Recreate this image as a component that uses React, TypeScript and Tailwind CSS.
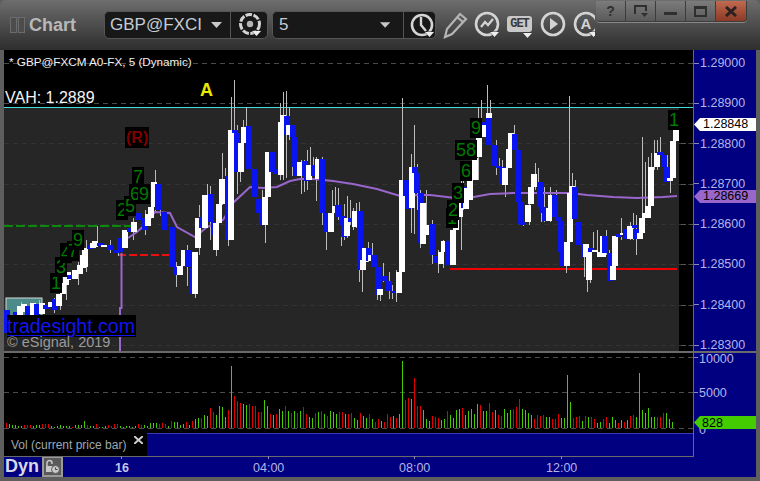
import React from "react";

// [x, top, bottom, colour: 1 = white, 0 = blue], all in page pixels
const bodies: number[][] = [
  [7, 310, 333, 0], [12, 318, 333, 1], [16, 312, 322, 0], [20, 306, 320, 1], [24, 304, 312, 1], [28, 306, 316, 0],
  [33, 303, 316, 1], [37, 304, 316, 0], [42, 303, 314, 1], [46, 305, 309, 0], [51, 302, 307, 1], [55, 299, 310, 0],
  [59, 294, 306, 1], [63, 283, 294, 1], [66, 276, 285, 1], [68, 272, 280, 1], [70, 275, 279, 0], [75, 270, 279, 1], [80, 265, 274, 1],
  [83, 255, 268, 1], [85, 248, 267, 1], [90, 245, 249, 0], [93, 243, 248, 1], [95, 241, 247, 1], [100, 243, 246, 0], [104, 245, 247, 1], [110, 245, 250, 0],
  [117, 250, 253, 0], [120, 238, 252, 0], [125, 230, 248, 1], [130, 228, 232, 0], [134, 222, 232, 1], [138, 213, 220, 0],
  [145, 218, 230, 0], [148, 214, 226, 1], [151, 207, 218, 1], [154, 182, 207, 1], [158, 184, 210, 0], [164, 212, 230, 0],
  [172, 227, 267, 0], [177, 267, 275, 0], [180, 266, 275, 1], [184, 250, 266, 1], [188, 250, 267, 0], [193, 268, 294, 0],
  [195, 252, 294, 1], [198, 218, 248, 1], [202, 217, 228, 0], [205, 195, 228, 1], [211, 194, 222, 0], [214, 222, 235, 0],
  [216, 223, 250, 1], [219, 204, 223, 1], [222, 179, 204, 1], [228, 176, 240, 0], [231, 130, 240, 1], [235, 130, 133, 0],
  [237, 133, 172, 0], [241, 143, 172, 1], [244, 127, 143, 1], [249, 126, 169, 0], [254, 169, 172, 0], [255, 172, 197, 0],
  [259, 199, 213, 0], [262, 213, 225, 0], [265, 197, 225, 1], [268, 152, 197, 1], [272, 152, 172, 0], [276, 169, 174, 0],
  [281, 122, 175, 1], [283, 115, 122, 1], [287, 116, 135, 0], [289, 125, 135, 1], [293, 125, 137, 0], [295, 137, 167, 0],
  [297, 167, 176, 0], [300, 162, 176, 1], [305, 161, 176, 0], [307, 176, 181, 0], [309, 165, 180, 1], [314, 165, 176, 0],
  [318, 159, 179, 1], [322, 159, 213, 0], [327, 213, 232, 0], [331, 213, 232, 1], [335, 206, 213, 1], [338, 205, 217, 0],
  [342, 216, 225, 0], [344, 225, 237, 0], [347, 218, 236, 1], [351, 218, 222, 0], [355, 211, 227, 1], [360, 211, 270, 0],
  [363, 260, 270, 1], [365, 248, 262, 1], [369, 248, 261, 0], [371, 255, 261, 1], [374, 255, 267, 0], [378, 267, 295, 0],
  [380, 289, 295, 1], [384, 276, 281, 0], [389, 281, 291, 0], [394, 291, 293, 0], [399, 272, 293, 1], [402, 180, 272, 1],
  [406, 180, 196, 0], [408, 196, 209, 0], [412, 167, 208, 1], [415, 167, 173, 0], [417, 173, 193, 0], [421, 193, 243, 0],
  [423, 203, 244, 1], [428, 225, 235, 1], [432, 224, 255, 0], [436, 256, 263, 0], [441, 252, 264, 1], [444, 241, 252, 1],
  [448, 241, 265, 0], [453, 230, 265, 1], [456, 217, 230, 1], [460, 186, 217, 1], [464, 187, 208, 0], [466, 188, 209, 1],
  [470, 180, 200, 1], [475, 158, 180, 1], [479, 122, 157, 1], [482, 122, 137, 0], [485, 125, 137, 1], [489, 113, 145, 0],
  [489, 113, 118, 1], [494, 145, 166, 0], [498, 166, 168, 0], [502, 167, 184, 0], [505, 168, 185, 1], [509, 149, 168, 1],
  [511, 133, 149, 1], [515, 134, 150, 0], [518, 150, 202, 0], [521, 202, 224, 0], [523, 222, 225, 0], [528, 205, 222, 1],
  [531, 187, 204, 1], [535, 174, 182, 0], [534, 174, 187, 1], [540, 182, 207, 0], [543, 207, 213, 0], [545, 213, 221, 0],
  [549, 208, 221, 1], [551, 195, 208, 1], [555, 195, 217, 0], [558, 217, 221, 0], [561, 221, 252, 0], [563, 252, 266, 0],
  [567, 242, 266, 1], [570, 193, 242, 1], [572, 186, 193, 1], [575, 187, 219, 0], [579, 222, 245, 0], [584, 244, 257, 0],
  [586, 244, 257, 1], [589, 248, 280, 1], [591, 248, 252, 0], [595, 250, 252, 1], [600, 252, 257, 1], [603, 236, 257, 1],
  [605, 236, 253, 0], [610, 253, 277, 0], [611, 266, 281, 0], [613, 266, 280, 1], [615, 236, 266, 1], [619, 234, 237, 0],
  [623, 233, 235, 1], [626, 229, 239, 0], [630, 226, 239, 1], [635, 225, 228, 0], [636, 229, 239, 0], [640, 233, 239, 1],
  [642, 218, 233, 1], [645, 213, 218, 1], [648, 206, 218, 1], [651, 167, 206, 1], [657, 153, 167, 1], [660, 152, 155, 0],
  [664, 155, 167, 0], [667, 167, 182, 0], [670, 178, 181, 1], [673, 141, 178, 1], [676, 124, 141, 1],
];

// [x, top, bottom]
const wicks: number[][] = [
  [21, 302, 320], [39, 300, 316], [54, 298, 313], [60, 285, 310], [66, 268, 300],
  [78, 262, 285], [86, 240, 272], [97, 226, 247], [110, 240, 253], [118, 240, 256], [133, 218, 240], [145, 210, 235],
  [155, 170, 212], [160, 190, 216], [176, 262, 287], [187, 245, 286], [195, 262, 298], [199, 205, 255], [207, 184, 228],
  [210, 186, 240], [216, 215, 256], [222, 153, 205], [225, 168, 222], [228, 176, 246], [231, 97, 240], [234, 80, 133],
  [237, 125, 194], [240, 168, 182], [243, 120, 160], [246, 107, 127], [259, 200, 225], [262, 190, 225], [265, 190, 243],
  [280, 103, 180], [283, 92, 180], [286, 91, 178], [289, 108, 140], [292, 140, 176], [301, 160, 194], [304, 160, 192],
  [307, 150, 190], [310, 147, 180], [313, 157, 176], [316, 157, 201], [322, 157, 225], [326, 213, 250], [332, 190, 232],
  [335, 187, 215], [338, 188, 220], [341, 216, 246], [344, 204, 240], [347, 196, 238], [350, 200, 225], [353, 208, 230],
  [356, 203, 228], [359, 202, 282], [362, 255, 292], [368, 242, 262], [372, 243, 262], [377, 267, 300], [380, 285, 301],
  [383, 263, 282], [389, 272, 299], [392, 285, 299], [396, 270, 302], [402, 98, 272], [411, 154, 233], [414, 125, 234],
  [417, 164, 210], [420, 190, 248], [426, 190, 235], [432, 220, 264], [438, 250, 273], [443, 240, 268], [461, 170, 250],
  [463, 172, 210], [478, 107, 180], [481, 100, 150], [487, 85, 137], [490, 100, 120], [496, 140, 175], [499, 158, 177],
  [502, 160, 183], [505, 170, 197], [514, 125, 150], [520, 195, 225], [523, 215, 226], [529, 187, 225], [535, 163, 190],
  [538, 168, 200], [541, 200, 222], [544, 187, 222], [550, 187, 222], [556, 190, 218], [562, 240, 255], [566, 250, 273],
  [569, 96, 195], [572, 173, 215], [575, 180, 190], [581, 235, 248], [584, 250, 277], [587, 250, 292], [590, 250, 283],
  [593, 232, 252], [597, 230, 252], [606, 230, 255], [609, 250, 257], [621, 218, 240], [630, 222, 240], [633, 213, 240],
  [636, 215, 255], [642, 137, 213], [645, 162, 210], [648, 157, 210], [651, 153, 190], [654, 140, 170], [657, 140, 170],
  [660, 137, 155], [667, 155, 182], [670, 180, 193], [676, 118, 141],
];

const ema =
  "128,238 137,232 147,223 155,212 170,213 177,227 195,237 207,227 223,220 233,203 250,187 263,188 277,187 290,181 300,179 313,179 333,181 353,184 377,189 400,196 420,195 430,195 447,197 463,199 490,194 513,193 547,193 570,193 587,195 613,197 637,198 663,197 677,196";

// volume by bar, 3px apart from x = 6; positive is green, negative red
const volume: number[] = [
  -5, 4, 3, 3, 2, 2, -3, -3, -3, 2, 3, 3, -4, -4, -4, 2, 1, 2, 3, 2, 2, 2, -1, 3, 3, 3, 7, -3, 2, 2, -4, 1, 1, 2, -3, -2,
  -4, -4, 2, 1, 2, 2, 1, 2, -4, -3, 3, 2, 5, 5, 5, -4, -5, -4, 2, -7, 6, 6, 3, 4, -6, 3, -7, 9, 10, -10, 13, 12, -20, -16,
  13, 22, 21, 11, -18, 62, -32, -27, -25, 24, 23, -24, -22, -22, -16, -16, 28, 22, -14, 13, -14, 19, 17, -22, 17, -15, 17,
  -15, 17, -21, -14, 11, 10, -15, 16, -17, 14, -12, 17, 16, 14, -16, -16, 14, -14, -15, 10, 8, -15, 12, 10, -14, 9, -6,
  -9, 7, -6, -14, -11, 12, -10, 14, 67, -28, -30, 29, -50, -22, -22, 18, 9, 7, -12, -11, -10, 8, 9, -17, 13, 10, 18, 19,
  -20, 13, 17, 19, 14, 24, -23, 17, 17, -25, -16, 18, -13, -12, 19, 15, 18, -19, -21, -29, 19, 18, 15, 13, -9, -13, -12,
  -13, 11, 11, -9, -9, -14, 10, 10, 53, 26, -10, -11, -12, 7, -12, 11, -11, -9, 5, 6, -9, -11, 5, 11, 8, -5, 8, -6, 8,
  -12, -13, 11, 55, 18, 15, 20, 11, 11, -11, -11, -15, 15, 9, 6,
];

const priceTicks = ["1.29000", "1.28900", "1.28800", "1.28700", "1.28600", "1.28500", "1.28400", "1.28300"];
const gridY = [63, 103, 143, 184, 224, 264, 305, 345];

// green sequence counts that sit on black boxes over the candles
const counts = [
  { t: "1", c: "left-[46px] top-[223px]" },
  { t: "3", c: "left-[51px] top-[207px]" },
  { t: "4", c: "left-[56px] top-[193px]" },
  { t: "7", c: "left-[63px] top-[191px]" },
  { t: "9", c: "left-[68px] top-[180px]" },
  { t: "2", c: "left-[112px] top-[150px]" },
  { t: "5", c: "left-[120px] top-[146px]" },
  { t: "6", c: "left-[125px] top-[134px]" },
  { t: "9", c: "left-[134px] top-[134px]" },
  { t: "7", c: "left-[128px] top-[117px]" },
  { t: "1", c: "left-[442px] top-[158px]" },
  { t: "2", c: "left-[443px] top-[150px]" },
  { t: "3", c: "left-[448px] top-[133px]" },
  { t: "6", c: "left-[456px] top-[111px]" },
  { t: "5", c: "left-[451px] top-[90px]" },
  { t: "8", c: "left-[461px] top-[90px]" },
  { t: "9", c: "left-[466px] top-[68px]" },
  { t: "1", c: "left-[664px] top-[60px]" },
];

function Caret({ className }: { className: string }) {
  return (
    <svg className={className} width="11" height="6" viewBox="0 0 11 6">
      <path d="M0 0h11L5.5 6z" fill="#c8c8c8" />
    </svg>
  );
}

function MiniCaret({ className }: { className: string }) {
  return (
    <svg className={`absolute ${className}`} width="11" height="7" viewBox="0 0 11 7">
      <path d="M1 1h9L5.5 6z" fill="#eee" stroke="#333" strokeWidth="1" paintOrder="stroke" />
    </svg>
  );
}

function Ring({ children, size = 26 }: { children?: React.ReactNode; size?: number }) {
  return (
    <svg width={size} height={size} viewBox="0 0 26 26" fill="none" stroke="#d4d4d4" strokeWidth="2.6">
      <circle cx="13" cy="13" r="11" />
      {children}
    </svg>
  );
}

function Header() {
  return (
    <div className="relative flex h-[50px] items-start rounded-t-[6px] bg-gradient-to-b from-[#6e6e6e] to-[#2e2e2e] pt-[11px] pl-[10px] font-['Liberation_Sans',sans-serif]">
      <div className="flex h-[28px] w-[94px] items-center">
        <span className="h-[16px] w-[7px] border border-[#6c6c6c] bg-[#4c4c4c]" />
        <span className="ml-px h-[16px] w-[7px] border border-[#6c6c6c] bg-[#4c4c4c]" />
        <span className="ml-[4px] text-[18px] font-bold text-[#b8b8b8]">Chart</span>
      </div>
      <div className="flex h-[28px] w-[164px] items-center rounded-[5px] border border-[#555] bg-[#181818]">
        <span className="ml-[5px] w-[93px] overflow-hidden text-[17px] whitespace-nowrap text-[#c4ccd4]">GBP@FXCI</span>
        <Caret className="ml-[8px]" />
        <span className="ml-[8px] h-full w-px bg-[#555]" />
        <div className="relative ml-[6px] h-[26px] w-[26px]">
          <svg width="26" height="26" viewBox="0 0 26 26" fill="none">
            <circle cx="13" cy="12" r="9.5" stroke="#d4d4d4" strokeWidth="3" strokeDasharray="6.5 1.5" />
            <circle cx="13" cy="12" r="3.2" fill="#b4b4b4" />
          </svg>
          <MiniCaret className="top-[18px] left-[14px]" />
        </div>
      </div>
      <div className="ml-[4px] flex h-[28px] w-[164px] items-center rounded-[5px] border border-[#555] bg-[#181818]">
        <span className="ml-[6px] w-[108px] text-[17px] text-[#c4ccd4]">5</span>
        <Caret className="" />
        <span className="ml-[13px] h-full w-px bg-[#555]" />
        <div className="relative ml-[6px] h-[26px] w-[25px]">
          <svg width="25" height="26" viewBox="0 0 25 26" fill="none">
            <circle cx="12" cy="13" r="10" stroke="#d4d4d4" strokeWidth="2.6" />
            <path d="M11 5v8l5 6" stroke="#d4d4d4" strokeWidth="2.4" />
          </svg>
          <MiniCaret className="top-[19px] left-[14px]" />
        </div>
      </div>
      <svg className="ml-[7px]" width="26" height="28" viewBox="0 0 26 28" fill="none" stroke="#b4b4b4" strokeWidth="2.2">
        <path d="M2 26l2-8L17 3l6 5-14 15z" />
        <path d="M14 6l6 5" />
      </svg>
      <div className="relative ml-[5px] h-[28px] w-[27px]">
        <Ring>
          <path d="M7 16l4-5 3 3 5-6" strokeWidth="2.2" />
        </Ring>
        <MiniCaret className="top-[20px] left-[15px]" />
      </div>
      <div className="relative mt-[5px] ml-[6px] h-[23px] w-[27px]">
        <span className="flex h-[16px] w-[25px] items-center justify-center rounded-[3px] bg-[#c8c8c8] font-['Liberation_Mono',monospace] text-[12px] leading-none font-bold tracking-[-1px] text-[#3a3a3a]">
          GET
        </span>
        <MiniCaret className="top-[16px] left-[15px]" />
      </div>
      <div className="ml-[6px]">
        <Ring>
          <path d="M10 7l8 6-8 6z" fill="#d4d4d4" stroke="none" />
        </Ring>
      </div>
      <div className="relative ml-[7px] h-[27px] w-[22px] overflow-hidden">
        <Ring>
          <text x="13" y="18" fontSize="15" fontFamily="Liberation Sans" fontWeight="bold" fill="#d4d4d4" stroke="none" textAnchor="middle">
            A
          </text>
        </Ring>
        <MiniCaret className="top-[20px] left-[15px]" />
      </div>
      {/* window buttons */}
      <div className="absolute top-px right-[13px] flex h-[21px] w-[151px] overflow-hidden rounded-b-[4px] border-r border-b border-[#3c3c3c] shadow-[0_1px_0_#888]">
        {["?", "", "", ""].map((g, i) => (
          <div
            key={i}
            className="flex w-[30px] items-center justify-center border-r border-[#3c3c3c] bg-gradient-to-b from-[#7c7c7c] to-[#5a5a5a] text-[14px] font-bold text-[#2f2f2f]"
          >
            {i === 0 && g}
            {i === 1 && (
              <svg width="14" height="14" viewBox="0 0 14 14" fill="none" stroke="#2f2f2f" strokeWidth="2">
                <path d="M1 10V2h11v5" />
                <path d="M7 9h7l-3.5 4z" fill="#2f2f2f" stroke="none" />
              </svg>
            )}
            {i === 2 && <span className="mt-[5px] h-[3px] w-[13px] bg-[#2f2f2f]" />}
            {i === 3 && <span className="h-[11px] w-[13px] border-2 border-t-[3px] border-[#2f2f2f]" />}
          </div>
        ))}
        <div className="flex flex-1 items-center justify-center bg-gradient-to-b from-[#c06a50] to-[#8c3a26]">
          <svg width="12" height="11" viewBox="0 0 12 11" stroke="#2b2020" strokeWidth="3">
            <path d="M1 1l10 9M11 1L1 10" />
          </svg>
        </div>
      </div>
    </div>
  );
}

function PriceTag({ className, arrow, text }: { className: string; arrow: string; text: string }) {
  return (
    <div className={`absolute left-[6px] h-[13px] w-[56px] pl-[3px] leading-[13px] ${className}`}>
      <svg className="absolute top-0 left-[-6px]" width="6" height="13" viewBox="0 0 6 13">
        <path d="M6 0v13L0 6.5z" fill={arrow} />
      </svg>
      {text}
    </div>
  );
}

function PricePane() {
  return (
    <div className="flex h-[301px]">
      <div className="relative w-[689px] bg-black">
        <svg className="absolute inset-0 block" width="689" height="301" viewBox="4 50 689 301">
          <rect x="4" y="108" width="675" height="243" fill="#262626" />
          {gridY.map((y) => (
            <line key={y} x1="4" x2="693" y1={y + 0.5} y2={y + 0.5} stroke={y < 108 ? "#4a4a4a" : "#333333"} strokeDasharray="5 4" />
          ))}
          {gridY.slice(2).map((y) => (
            <line key={y} x1="681" x2="693" y1={y + 0.5} y2={y + 0.5} stroke="#555555" strokeDasharray="5 4" />
          ))}
          <line x1="4" x2="693" y1="107.5" y2="107.5" stroke="#45dcdc" />
          <rect x="6" y="298" width="36" height="18" fill="#4d8a8a" stroke="#d8d8d8" strokeWidth="1" />
          <line x1="4" x2="131" y1="226" y2="226" stroke="#0a8a0a" strokeWidth="2" strokeDasharray="9 3" />
          <line x1="118" x2="172" y1="255" y2="255" stroke="#e81010" strokeWidth="2" strokeDasharray="8 3" />
          <line x1="450" x2="677" y1="269" y2="269" stroke="#f00000" strokeWidth="2" />
          <path d="M121.5 253V308H120V351" fill="none" stroke="#9966cc" strokeWidth="2" />
          {wicks.map(([x, a, b], i) => (
            <line key={i} x1={x + 0.5} x2={x + 0.5} y1={a} y2={b} stroke="#bcbcbc" />
          ))}
          <polyline points={ema} fill="none" stroke="#9966cc" strokeWidth="2" />
          {bodies.map(([x, a, b, up], i) => (
            <rect key={i} x={x - 3} y={a} width="6" height={b - a} fill={up ? "#ffffff" : "#0a14f0"} />
          ))}
        </svg>
        <div className="absolute inset-0 font-['Liberation_Sans',sans-serif]">
          <span className="absolute top-[5px] left-[5px] text-[11.7px] leading-[14px] whitespace-nowrap text-[#f0f0f0]">
            * GBP@FXCM A0-FX, 5 (Dynamic)
          </span>
          <span className="absolute top-[39px] left-px text-[16px] leading-[18px] whitespace-nowrap text-[#f4f4f4]">VAH: 1.2889</span>
          <span className="absolute top-[30px] left-[196px] text-[18px] leading-[20px] font-bold text-[#e8e800]">A</span>
          <span className="absolute top-[77px] left-[121px] bg-black px-px text-[16px] leading-[21px] font-bold text-[#800000]">(R)</span>
          {counts.map((n, i) => (
            <span key={i} className={`absolute bg-black px-[1px] text-[18px] leading-[20px] text-[#007a00] ${n.c}`}>
              {n.t}
            </span>
          ))}
          <span className="absolute top-[265px] left-[3px] bg-black pr-[1px] text-[19.5px] leading-[22px] whitespace-nowrap text-[#1414f0] underline decoration-1 underline-offset-2">
            tradesight.com
          </span>
          <span className="absolute top-[284px] left-[3px] text-[14.5px] leading-[16px] whitespace-nowrap text-[#9a9a9a]">© eSignal, 2019</span>
        </div>
      </div>
      <div className="relative w-[63px] border-l border-[#6a6a6a] bg-[#000080] pt-[6px] font-['Liberation_Sans',sans-serif] text-[12.5px] leading-[14px] text-[#b4b4e8]">
        <div className="flex flex-col gap-[26.3px]">
          {priceTicks.map((p) => (
            <div key={p} className="flex h-[14px] items-center">
              <span className="h-px w-[5px] bg-[#8a8ab4]" />
              <span className="ml-px">{p}</span>
            </div>
          ))}
        </div>
        <PriceTag className="top-[68px] bg-white text-black" arrow="#ffffff" text="1.28848" />
        <PriceTag className="top-[140px] bg-[#9966cc] text-black" arrow="#9966cc" text="1.28669" />
      </div>
    </div>
  );
}

function VolumePane() {
  return (
    <div className="flex h-[80px]">
      <svg className="block bg-black" width="689" height="80" viewBox="4 353 689 80">
        {[357, 392, 428].map((y) => (
          <line key={y} x1="4" x2="693" y1={y + 0.5} y2={y + 0.5} stroke="#4c4c4c" strokeDasharray="5 4" />
        ))}
        {volume.map((v, i) => (
          <rect key={i} x={6 + 3 * i} y={428 - Math.abs(v)} width="1" height={Math.abs(v)} fill={v > 0 ? "#44cc00" : "#e00000"} />
        ))}
      </svg>
      <div className="relative w-[63px] border-l border-[#6a6a6a] bg-[#000080] font-['Liberation_Sans',sans-serif] text-[12.5px] text-[#b4b4e8]">
        <span className="absolute top-[-1px] left-[5px] leading-[14px]">10000</span>
        <span className="absolute top-[33px] left-[5px] leading-[14px]">5000</span>
        <span className="absolute top-[70px] left-[5px] leading-[14px]">0</span>
        <span className="absolute top-[4px] left-0 h-px w-[4px] bg-[#8a8ab4]" />
        <span className="absolute top-[39px] left-0 h-px w-[4px] bg-[#8a8ab4]" />
        <div className="absolute top-[63px] left-[6px] h-[13px] w-[56px] bg-[#44cc00] pl-[2px] leading-[14px] text-black">
          <svg className="absolute top-0 left-[-6px]" width="6" height="13" viewBox="0 0 6 13">
            <path d="M6 0v13L0 6.5z" fill="#44cc00" />
          </svg>
          828
        </div>
      </div>
    </div>
  );
}

function Footer() {
  return (
    <div className="font-['Liberation_Sans',sans-serif]">
      <div className="flex h-[23px] bg-[#000080]">
        <div className="relative flex w-[143px] items-center bg-black pl-[7px] text-[12px] whitespace-nowrap text-[#9ca8b4]">
          Vol (current price bar)
          <svg className="absolute top-[3px] left-[130px]" width="9" height="8" viewBox="0 0 9 8" stroke="#d0d0d0" strokeWidth="2">
            <path d="M0 0l9 8M9 0L0 8" />
          </svg>
        </div>
        <div className="h-full w-[546px] border-t border-[#3838b4]" />
        <div className="flex-1 border-l border-[#6a6a6a]" />
      </div>
      <div className="relative flex h-[21px] items-center bg-[#000080]">
        <span className="absolute top-0 left-0 h-px w-[690px] bg-[#6a6a6a]" />
        <span className="ml-[1px] w-[37px] text-[18px] font-bold text-[#d8d8e8]">Dyn</span>
        <span className="flex h-[21px] w-[21px] items-center justify-center border-2 border-[#9a9a9a] bg-[#5a5a5a]">
          <svg width="15" height="15" viewBox="0 0 15 15" fill="none">
            <path d="M2 7V4a2.5 2.5 0 0 1 5 0v1" stroke="#c8c8c8" strokeWidth="1.5" />
            <path d="M1 7h7v6H1z" fill="#c8c8c8" />
            <circle cx="10.5" cy="10.5" r="4" fill="#c8c8c8" stroke="#5a5a5a" />
            <path d="M10.5 8.5v2h2" stroke="#444" />
          </svg>
        </span>
        <span className="absolute top-0 left-[117px] h-[3px] w-px bg-[#8a8ab4]" />
        <span className="absolute top-0 left-[264px] h-[3px] w-px bg-[#8a8ab4]" />
        <span className="absolute top-0 left-[410px] h-[3px] w-px bg-[#8a8ab4]" />
        <span className="absolute top-0 left-[557px] h-[3px] w-px bg-[#8a8ab4]" />
        <span className="absolute top-[5px] left-[111px] text-[12.5px] leading-[14px] font-bold text-[#c4c4ec]">16</span>
        <span className="absolute top-[5px] left-[249px] text-[12.5px] leading-[14px] text-[#b4b4e8]">04:00</span>
        <span className="absolute top-[5px] left-[395px] text-[12.5px] leading-[14px] text-[#b4b4e8]">08:00</span>
        <span className="absolute top-[5px] left-[542px] text-[12.5px] leading-[14px] text-[#b4b4e8]">12:00</span>
      </div>
    </div>
  );
}

export default function App() {
  return (
    <div className="relative h-[481px] w-[760px] overflow-hidden bg-[#5e5e5e]">
      <Header />
      <div className="mx-[4px] w-[752px]">
        <PricePane />
        <div className="h-[2px] bg-[#6a6a6a]" />
        <VolumePane />
        <Footer />
      </div>
    </div>
  );
}
